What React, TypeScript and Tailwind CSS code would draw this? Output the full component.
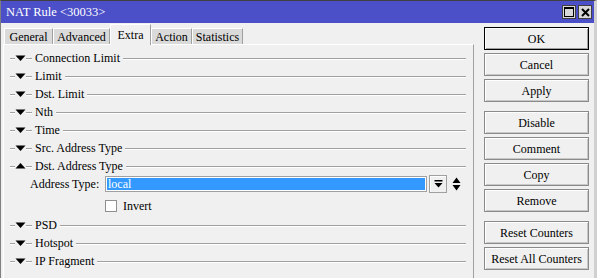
import React from "react";

const font = { fontFamily: '"Liberation Serif", "Times New Roman", serif' };

function Etch({ className = "" }: { className?: string }) {
  return (
    <div className={`flex flex-col ${className}`}>
      <div className="h-px bg-[#a0a0a0]" />
      <div className="h-px bg-white" />
    </div>
  );
}

function Section({ label, open = false }: { label: string; open?: boolean }) {
  return (
    <div className="flex h-[18px] items-center">
      <Etch className="ml-[6px] w-[5px] mt-[1px]" />
      <svg width="11" height="6" viewBox="0 0 11 6" className="block">
        {open ? (
          <polygon points="5.5,0 10.5,5.5 0.5,5.5" fill="#000" />
        ) : (
          <polygon points="0.5,0.5 10.5,0.5 5.5,6" fill="#000" />
        )}
      </svg>
      <Etch className="w-[6px] mt-[1px]" />
      <span className="ml-[3px] mr-[3px] text-[12px] leading-none text-black whitespace-nowrap">{label}</span>
      <Etch className="flex-1 mr-[7px] mt-[1px]" />
    </div>
  );
}

function Btn({ label, def = false }: { label: string; def?: boolean }) {
  return (
    <div
      className={`flex h-[23px] w-[105px] items-center justify-center border bg-[#f0f0f0] text-[12px] text-black ${
        def ? "border-black shadow-[inset_1px_1px_0_#ffffff,inset_-1px_-1px_0_#a0a0a0]" : "border-[#8a8a8a] shadow-[inset_1px_1px_0_#ffffff,inset_-1px_-1px_0_#c8c8c8]"
      }`}
    >
      {label}
    </div>
  );
}

function Tab({ label, w, active = false }: { label: string; w: number; active?: boolean }) {
  return (
    <div
      style={{ width: w }}
      className={`flex items-center justify-center text-[12px] text-black border-l border-t border-white border-r ${
        active
          ? "h-[21px] bg-[#f0f0f0] border-r-[#a0a0a0] relative top-[1px]"
          : "h-[16px] bg-[#dadada] border-r-[#a0a0a0]"
      }`}
    >
      {label}
    </div>
  );
}

export default function App() {
  return (
    <div
      style={font}
      className="relative h-[278px] w-[597px] overflow-hidden bg-[#f0f0f0] border-t border-[#404040] border-l border-l-[#808080] border-r-[3px] border-r-[#d0d0d0]"
    >
      {/* Title bar */}
      <div className="flex h-[22px] items-center justify-between bg-[#4b50c9] pl-[5px] pr-[2px]">
        <span className="text-[12.5px] leading-none text-white">NAT Rule &lt;30033&gt;</span>
        <div className="flex gap-[2px]">
          <div className="flex h-[14px] w-[14px] items-center justify-center border border-[#404040] bg-[#d8d8d8]">
            <div className="h-[10px] w-[10px] border border-black border-t-2" />
          </div>
          <div className="flex h-[14px] w-[14px] items-center justify-center border border-[#404040] bg-[#d8d8d8]">
            <svg width="9" height="9" viewBox="0 0 9 9">
              <path d="M1 1 L8 8 M8 1 L1 8" stroke="#000" strokeWidth="2" />
            </svg>
          </div>
        </div>
      </div>

      <div className="flex">
        {/* Left: tabs + panel */}
        <div className="flex w-[474px] flex-col">
          <div className="flex h-[21px] items-end pl-[3px]">
            <Tab label="General" w={49} />
            <Tab label="Advanced" w={57} />
            <Tab label="Extra" w={41} active />
            <Tab label="Action" w={41} />
            <Tab label="Statistics" w={51} />
          </div>
          <div className="ml-[2px] h-[240px] w-[471px] border-l border-t border-white border-r border-r-[#a0a0a0] pt-[4px]">
            <Section label="Connection Limit" />
            <Section label="Limit" />
            <Section label="Dst. Limit" />
            <Section label="Nth" />
            <Section label="Time" />
            <Section label="Src. Address Type" />
            <Section label="Dst. Address Type" open />
            <div className="flex h-[18px] items-center">
              <span className="ml-[26px] w-[75px] text-[12px] leading-none text-black">Address Type:</span>
              <div className="flex h-[16px] w-[322px] items-center border border-[#a0a0a0] bg-[#3399ff] shadow-[inset_1px_1px_0_#ffffff,inset_-1px_-1px_0_#ffffff] pl-[2px] text-[12px] leading-none text-white">
                local
              </div>
              <div className="ml-[2px] flex h-[18px] w-[18px] items-center justify-center border border-[#a0a0a0] bg-[#f0f0f0] shadow-[inset_1px_1px_0_#ffffff]">
                <svg width="9" height="8" viewBox="0 0 9 8">
                  <rect x="0.5" y="0" width="8" height="1.5" fill="#000" />
                  <polygon points="0.5,3 8.5,3 4.5,7.5" fill="#000" />
                </svg>
              </div>
              <svg width="9" height="14" viewBox="0 0 9 14" className="ml-[5px]">
                <polygon points="4.5,0.5 8.5,6 0.5,6" fill="#000" />
                <polygon points="0.5,8 8.5,8 4.5,13.5" fill="#000" />
              </svg>
            </div>
            <div className="flex h-[23px] items-center pt-[3px]">
              <div className="ml-[101px] h-[12px] w-[12px] border border-[#8f8f8f] bg-white" />
              <span className="ml-[6px] text-[12px] leading-none text-black">Invert</span>
            </div>
            <Section label="PSD" />
            <Section label="Hotspot" />
            <Section label="IP Fragment" />
          </div>
        </div>

        {/* Right: buttons */}
        <div className="ml-[9px] mt-[4px] flex flex-col">
          <div className="flex flex-col gap-[3px]">
            <Btn label="OK" def />
            <Btn label="Cancel" />
            <Btn label="Apply" />
          </div>
          <div className="mt-[9px] flex flex-col gap-[3px]">
            <Btn label="Disable" />
            <Btn label="Comment" />
            <Btn label="Copy" />
            <Btn label="Remove" />
          </div>
          <div className="mt-[9px] flex flex-col gap-[3px]">
            <Btn label="Reset Counters" />
            <Btn label="Reset All Counters" />
          </div>
        </div>
      </div>
    </div>
  );
}
